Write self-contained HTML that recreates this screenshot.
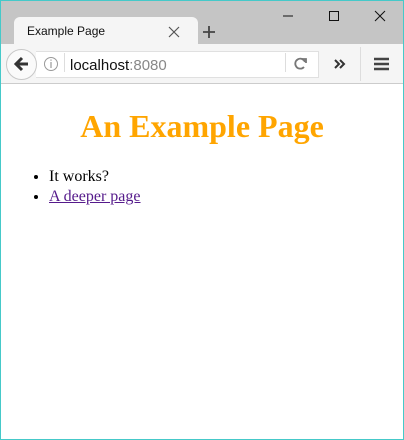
<!DOCTYPE html>
<html><head><meta charset="utf-8"><style>
*{margin:0;padding:0;box-sizing:border-box}
html,body{width:404px;height:440px;overflow:hidden;background:#fff}
#frame{position:absolute;left:0;top:0;width:404px;height:440px;border:1px solid #45c9c9;z-index:10}
.abs{position:absolute}
#title{left:0;top:0;width:404px;height:44px;background:#c5c5c5}
#tab{left:14px;top:17px;width:184px;height:28px;background:#f5f5f5;border-radius:6px 6px 0 0}
#tabtxt{left:27px;top:24px;font:12px "Liberation Sans",sans-serif;color:#111}
#toolbar{left:0;top:44px;width:404px;height:40px;background:#f5f5f5;border-bottom:1px solid #ccc}
#url{left:36px;top:51px;width:283px;height:27px;background:#fff;border:1px solid #e0e0e0;border-left:none}
#back{left:6px;top:49px;width:31px;height:31px;border-radius:50%;background:#fafafa;border:1px solid #c8c8c8}
#urltxt{left:70px;top:57px;font:15px "Liberation Sans",sans-serif;color:#111}
h1{position:absolute;left:0;width:404px;top:108px;text-align:center;font:bold 32px "Liberation Serif",serif;color:#ffa500}
ul{position:absolute;left:49px;top:167px;font:16px "Liberation Serif",serif;list-style:disc;line-height:20px}
a{color:#551a8b}
</style></head><body>
<div id="frame"></div>
<div id="title" class="abs"></div>
<div id="tab" class="abs"></div>
<div id="tabtxt" class="abs">Example Page</div>
<svg class="abs" style="left:0;top:0" width="404" height="90">
<path d="M169 27l10 10M179 27l-10 10" stroke="#555" stroke-width="1.2"/>
<path d="M203 32h12M209 26v12" stroke="#444" stroke-width="1.8"/>
<path d="M283 16h10" stroke="#111" stroke-width="1"/>
<rect x="329.5" y="11.5" width="9" height="9" fill="none" stroke="#111"/>
<path d="M375 11l10 10M385 11l-10 10" stroke="#111" stroke-width="1"/>
</svg>
<div id="toolbar" class="abs"></div>
<div id="url" class="abs"></div>
<div id="back" class="abs"></div>
<svg class="abs" style="left:0;top:44px" width="404" height="40">
<path d="M28 20h-11M22 14l-6 6 6 6" stroke="#333" stroke-width="3" fill="none"/>
<circle cx="51" cy="20" r="6.5" fill="none" stroke="#999" stroke-width="1"/>
<path d="M51 18v6M51 15.5v1.2" stroke="#999" stroke-width="1.2"/>
<path d="M64.5 9v19" stroke="#ddd"/>
<path d="M285.5 9v19" stroke="#ddd"/>
<path d="M305 18a5 5 0 1 0-1 5" stroke="#777" stroke-width="1.8" fill="none"/>
<path d="M302 15h4v4" stroke="#777" stroke-width="1.8" fill="none"/>
<path d="M335 16l4 4-4 4M340 16l4 4-4 4" stroke="#333" stroke-width="2" fill="none"/>
<path d="M360.5 3v34" stroke="#ddd"/>
<path d="M374 15h15M374 20h15M374 25h15" stroke="#444" stroke-width="2.5"/>
</svg>
<div id="urltxt" class="abs">localhost<span style="color:#888">:8080</span></div>
<h1>An Example Page</h1>
<ul><li>It works?</li><li><a href="#">A deeper page</a></li></ul>
</body></html>
